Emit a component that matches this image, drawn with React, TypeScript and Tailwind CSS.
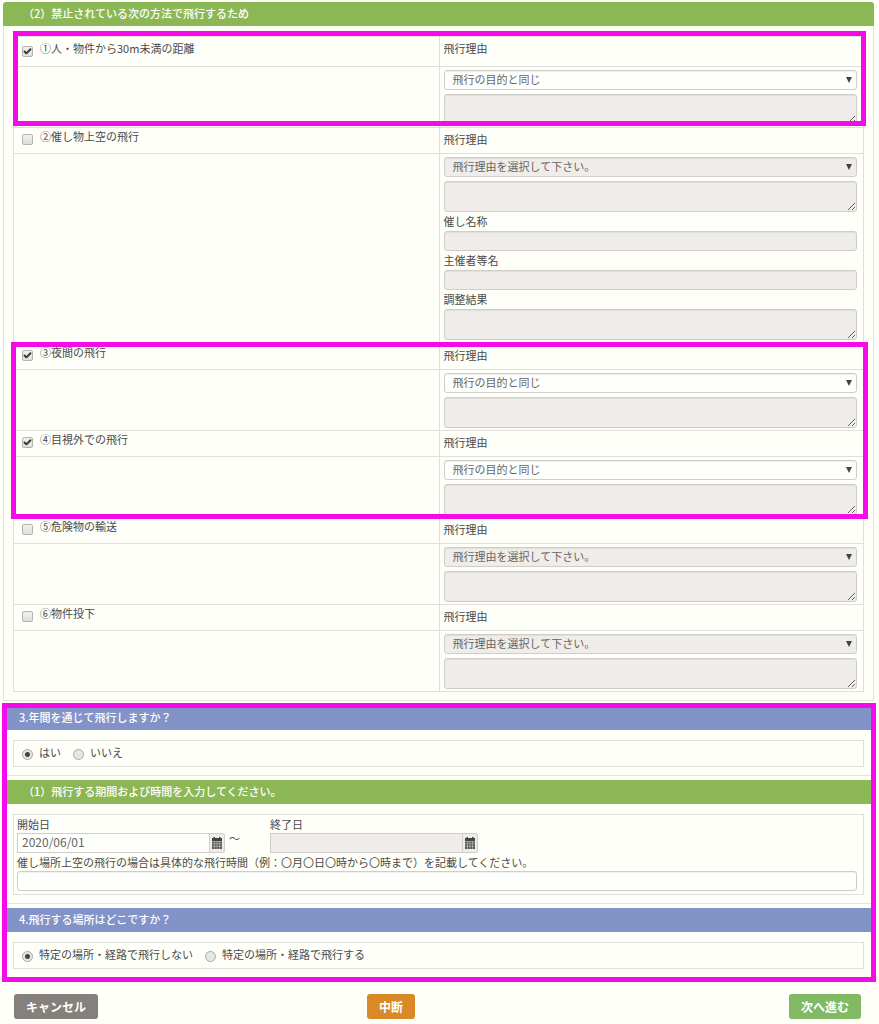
import type { ReactNode } from "react";
import { Check } from "lucide-react";

interface FlightMethod {
  id: string;
  label: string;
  checked: boolean;
  extra?: boolean;
}

const methods: FlightMethod[] = [
  { id: "distance", label: "①人・物件から30m未満の距離", checked: true },
  { id: "event", label: "②催し物上空の飛行", checked: false, extra: true },
  { id: "night", label: "③夜間の飛行", checked: true },
  { id: "bvlos", label: "④目視外での飛行", checked: true },
  { id: "hazard", label: "⑤危険物の輸送", checked: false },
  { id: "drop", label: "⑥物件投下", checked: false },
];

const field =
  "block w-full rounded-[3px] border border-[#cfcdca] bg-[#fefefc] px-2 text-[#666] shadow-[inset_0_1px_1px_rgba(0,0,0,0.06)] outline-none disabled:bg-[#efece9]";

// 強調用のピンク枠
function Highlight({ className }: { className: string }) {
  return <div className={`pointer-events-none absolute z-10 border-[5px] border-[#f50be8] ${className}`} />;
}

function CheckBox({ id, checked }: { id: string; checked: boolean }) {
  return (
    <span className="relative mt-1.5 block h-[11px] w-[11px] shrink-0">
      <input
        id={id}
        type="checkbox"
        defaultChecked={checked}
        className="peer block h-full w-full appearance-none rounded-[2px] border border-[#b3b3b1] bg-gradient-to-b from-[#f0f0ee] to-[#dededc]"
      />
      <Check
        strokeWidth={5}
        className="pointer-events-none absolute top-px left-px hidden h-[9px] w-[9px] text-[#333] peer-checked:block"
      />
    </span>
  );
}

function Radio({ name, label, checked }: { name: string; label: string; checked?: boolean }) {
  return (
    <label className="flex items-start gap-1.5 leading-[23px]">
      <input
        type="radio"
        name={name}
        defaultChecked={checked}
        className="mt-2 h-[11px] w-[11px] appearance-none rounded-full border border-[#a9a9a7] bg-[#e6e6e4] checked:bg-[radial-gradient(circle,#444_0_2px,#e6e6e4_3px)]"
      />
      {label}
    </label>
  );
}

function ReasonSelect({ id, enabled }: { id: string; enabled: boolean }) {
  return (
    <div className="relative">
      <select id={id} disabled={!enabled} className={`${field} h-5 appearance-none pb-0.5 leading-4 disabled:opacity-100`}>
        <option>{enabled ? "飛行の目的と同じ" : "飛行理由を選択して下さい。"}</option>
      </select>
      <svg viewBox="0 0 6 6" className="pointer-events-none absolute top-[7px] right-[5px] h-1.5 w-1.5 fill-[#444]">
        <path d="M0 0h6L3 6z" />
      </svg>
    </div>
  );
}

function MethodRow({ method, first }: { method: FlightMethod; first?: boolean }) {
  const { id, label, checked, extra } = method;
  return (
    <div className="relative border-b border-[#dfdfdb]">
      <div className={`grid grid-cols-2 border-b border-[#dfdfdb] ${first ? "h-[30px]" : "h-[26px]"}`}>
        <div className={`flex gap-[7px] pl-2 ${first ? "pt-[3px]" : ""}`}>
          <CheckBox id={id} checked={checked} />
          <label htmlFor={id} className="leading-[17px]">{label}</label>
        </div>
        <label htmlFor={`${id}-reason`} className="border-l border-[#dfdfdb] pl-1 leading-[23px]">
          飛行理由
        </label>
      </div>
      <div className="grid grid-cols-2">
        <div />
        <div className="border-l border-[#dfdfdb] pt-[3px] pr-1.5 pb-0.5 pl-1">
          <ReasonSelect id={`${id}-reason`} enabled={checked} />
          <textarea disabled aria-label={`${label} 飛行理由`} className={`${field} mt-1 h-[31px] resize-y`} />
          {extra && (
            <div className="pb-px leading-[19px]">
              <label htmlFor="event-name" className="block">催し名称</label>
              <input id="event-name" type="text" disabled className={`${field} h-5`} />
              <label htmlFor="event-host" className="block">主催者等名</label>
              <input id="event-host" type="text" disabled className={`${field} h-5`} />
              <label htmlFor="event-result" className="block">調整結果</label>
              <textarea id="event-result" disabled className={`${field} h-[31px] resize-y`} />
            </div>
          )}
        </div>
      </div>
      {first && <Highlight className="-top-1.5 -right-[3px] bottom-px -left-px" />}
    </div>
  );
}

function Panel({ title, color, children }: { title: string; color: "green" | "blue"; children: ReactNode }) {
  return (
    <section className="rounded-t-[3px] border-b border-[#e4e4df]">
      <h2
        className={`h-6 rounded-t-[3px] leading-[23px] font-medium text-white ${
          color === "green" ? "bg-[#8cb755] pl-5" : "bg-[#8293c8] pl-4"
        }`}
      >
        {title}
      </h2>
      <div className="border-x border-[#e4e4df] px-[9px] pt-2.5 pb-2">{children}</div>
    </section>
  );
}

function CalendarIcon() {
  return (
    <svg viewBox="0 0 12 12" className="h-3 w-3">
      <path fill="#444" d="M1 1h1.5V0H4v1h4V0h1.5v1H11v3H1z" />
      <path fill="#555" d="M1 4.5h10V12H1z" />
      <path stroke="#c9c7c4" strokeWidth=".6" d="M1 6.8h10M1 9.3h10M3.5 4.5V12M6 4.5V12M8.5 4.5V12" />
    </svg>
  );
}

function DateField({ id, label, value, disabled }: { id: string; label: string; value?: string; disabled?: boolean }) {
  return (
    <div>
      <label htmlFor={id} className="block">{label}</label>
      <div className="flex h-5">
        <input
          id={id}
          type="text"
          defaultValue={value}
          disabled={disabled}
          className="w-[193px] border border-[#cfcdca] bg-[#fefefc] px-1 pb-0.5 text-xs text-[#666] outline-none disabled:bg-[#efece9]"
        />
        <button
          type="button"
          aria-label={`${label}を選択`}
          className="flex w-[15px] items-center justify-center rounded-r-[3px] border border-l-0 border-[#cfcdca] bg-[#efece9]"
        >
          <CalendarIcon />
        </button>
      </div>
    </div>
  );
}

export default function App() {
  const [distance, event, night, bvlos, hazard, drop] = methods;

  return (
    <form className="min-h-screen bg-[#fefff9] pt-0.5 pr-[5px] pl-[3px] font-['Noto_Sans_CJK_JP',sans-serif] text-[11px] text-[#4a4a4a]">
      <Panel title="（2）禁止されている次の方法で飛行するため" color="green">
        <div className="border border-b-0 border-[#dfdfdb]">
          <MethodRow method={distance} first />
          <MethodRow method={event} />
          <div className="relative">
            <MethodRow method={night} />
            <MethodRow method={bvlos} />
            <Highlight className="-top-0.5 -right-[5px] -bottom-px -left-[3px]" />
          </div>
          <MethodRow method={hazard} />
          <MethodRow method={drop} />
        </div>
      </Panel>

      <div className="relative mt-[5px] flex flex-col gap-1">
        <Panel title="3.年間を通じて飛行しますか？" color="blue">
          <div className="flex h-[27px] gap-3 border border-[#dfdfdb] pl-2">
            <Radio name="yearly" label="はい" checked />
            <Radio name="yearly" label="いいえ" />
          </div>
        </Panel>

        <Panel title="（1）飛行する期間および時間を入力してください。" color="green">
          <div className="border border-[#dfdfdb] pr-1.5 pb-[3px] pl-[3px] leading-[18px]">
            <div className="flex">
              <DateField id="start" label="開始日" value="2020/06/01" />
              <span className="w-[45px] pt-3.5 pl-1">～</span>
              <DateField id="end" label="終了日" disabled />
            </div>
            <label htmlFor="event-time" className="block">
              催し場所上空の飛行の場合は具体的な飛行時間（例：〇月〇日〇時から〇時まで）を記載してください。
            </label>
            <input id="event-time" type="text" className={`${field} h-5`} />
          </div>
        </Panel>

        <Panel title="4.飛行する場所はどこですか？" color="blue">
          <div className="flex h-[27px] gap-3 border border-[#dfdfdb] pl-2">
            <Radio name="place" label="特定の場所・経路で飛行しない" checked />
            <Radio name="place" label="特定の場所・経路で飛行する" />
          </div>
        </Panel>
        <Highlight className="-top-[3px] -right-0.5 -bottom-1 -left-px" />
      </div>

      <div className="flex pt-4 pr-[13px] pb-1 pl-[11px] text-xs leading-[25px] font-bold text-white">
        <div className="w-5/12">
          <button type="button" className="rounded-[3px] bg-[#85807b] px-3">キャンセル</button>
        </div>
        <button type="button" className="rounded-[3px] bg-[#d98a26] px-3">中断</button>
        <button type="button" className="ml-auto rounded-[3px] bg-[#82b964] px-3">次へ進む</button>
      </div>
    </form>
  );
}
